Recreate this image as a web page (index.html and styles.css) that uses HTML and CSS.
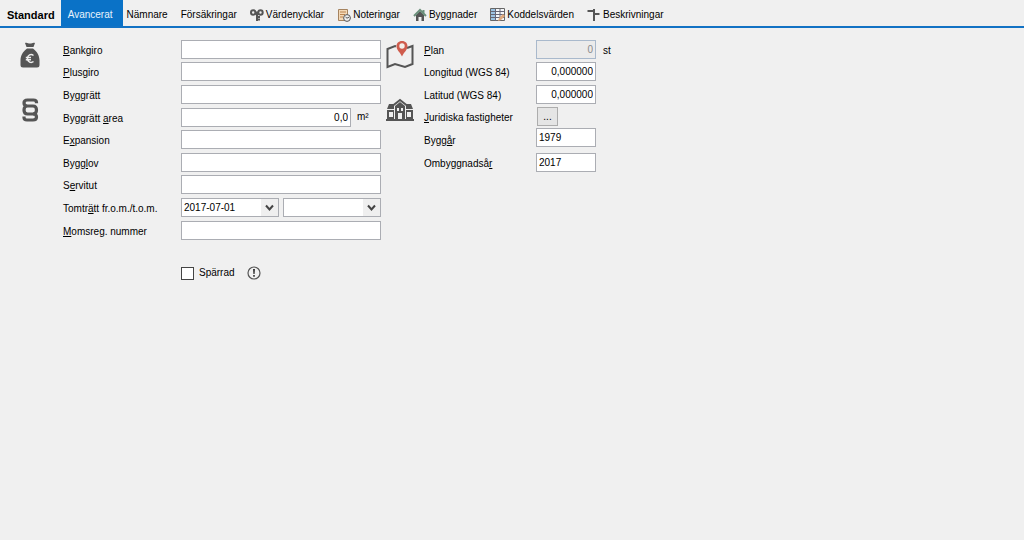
FILE: index.html
```html
<!DOCTYPE html>
<html lang="sv">
<head>
<meta charset="utf-8">
<title>Fastighet</title>
<link rel="stylesheet" href="styles.css">
</head>
<body>
<nav class="tabs">
  <button class="tab tab-standard">Standard</button>
  <button class="tab tab-active">Avancerat</button>
  <button class="tab tab-plain">Nämnare</button>
  <button class="tab">Försäkringar</button>
  <button class="tab"><svg width="14" height="14" viewBox="0 0 14 14" fill="none" stroke="#555" stroke-width="2"><circle cx="3.200" cy="4.500" r="2.200"/><circle cx="10.500" cy="4.500" r="2.200"/><path d="M5 5h4" stroke-width="3"/><path d="M7 5v8M7 9h3M7 11.500h3"/></svg>Värdenycklar</button>
  <button class="tab"><svg width="14" height="14" viewBox="0 0 14 14" fill="none"><path d="M1.500 1.500h9v11h-9z" fill="#f3d9b8" stroke="#a5835f"/><path d="M3 4h6M3 6.500h5M3 9h3" stroke="#b9824e"/><circle cx="10" cy="10" r="3.400" fill="#eee" stroke="#555"/><path d="M8.500 9l1.500 1.200 2-1" stroke="#555"/></svg>Noteringar</button>
  <button class="tab"><svg width="14" height="14" viewBox="0 0 14 14"><path d="M3 7l4-4 4 4v6H8.500V9H5.500v4H3z" fill="#555"/><path d="M1 8l6-6 6 6M10.500 2v3" fill="none" stroke="#6b8f7b" stroke-width="2"/></svg>Byggnader</button>
  <button class="tab"><svg width="15" height="14" viewBox="0 0 15 14"><path d="M.5.500h14v12H.5z" fill="#f4f6f8" stroke="#666"/><path d="M1 1h4v11H1z" fill="#9cc3e2"/><path d="M1 3.500h13M1 6.500h13M1 9.500h13M5.500 1v12M10 1v12" stroke="#667" fill="none"/><path d="M8 13l1-3 4-4 2 2-4 4z" fill="#dfa97d"/></svg>Koddelsvärden</button>
  <button class="tab"><svg width="14" height="14" viewBox="0 0 14 14"><path d="M6 1h2v12H6zM1 2h6v2H1L0 3zM8 5h4l1 1-1 1H8z" fill="#555"/></svg>Beskrivningar</button>
</nav>
<main class="panel">
  <div class="icons icons-left">
    <svg width="20" height="26" viewBox="0 0 20 26"><path d="M5 1c2-1 3 .6 5 .6S13 0 15 1l-1.500 4h-7zM7 6.500h6c4 3 6.500 7 6.500 12V23q0 2.500-2.500 2.500H3Q.5 25.500.5 23v-4.500c0-5 2.500-9 6.500-12z" fill="#555"/><path d="M13.500 13.500c-2.500-2-6-.5-6 3s3.500 5 6 3M5.800 15.500H11M5.800 17.700H11" fill="none" stroke="#f0f0f0" stroke-width="1.500"/></svg>
    <svg class="icon-law" width="20" height="24" viewBox="0 0 20 24" fill="none" stroke="#555" stroke-width="3.200" stroke-linejoin="round"><path d="M16.500 5.200V4.500q0-2.500-3-2.500H7.500Q4 2 4 5t3.500 3H13q3.500 0 3.500 4T13 16H7.500Q4 16 4 12t3.500-4"/><path d="M13 16q3.500 0 3.500 3T13 22H7q-3 0-3-2.500v-1"/></svg>
  </div>
  <div class="form form-left">
    <label for="bankgiro"><u>B</u>ankgiro</label><input id="bankgiro">
    <label for="plusgiro"><u>P</u>lusgiro</label><input id="plusgiro">
    <label for="byggratt">By<u>g</u>grätt</label><input id="byggratt">
    <label for="area">Byggrätt <u>a</u>rea</label><div class="pair pair-unit"><input id="area" class="num" value="0,0"><span>m²</span></div>
    <label for="expansion">E<u>x</u>pansion</label><input id="expansion">
    <label for="bygglov">Bygg<u>l</u>ov</label><input id="bygglov">
    <label for="servitut">S<u>e</u>rvitut</label><input id="servitut">
    <label for="from">Tomtr<u>ä</u>tt fr.o.m./t.o.m.</label>
    <div class="pair">
      <div class="combo"><select id="from"><option>2017-07-01</option></select><svg class="arrow" width="17" height="17" viewBox="0 0 17 17"><path d="M0 0h17v17H0z" fill="#efefef"/><path d="M5 6.500l3.500 4 3.500-4" fill="none" stroke="#444" stroke-width="2"/></svg></div>
      <div class="combo"><select aria-label="Tomträtt t.o.m."><option></option></select><svg class="arrow" width="17" height="17" viewBox="0 0 17 17"><path d="M0 0h17v17H0z" fill="#efefef"/><path d="M5 6.500l3.500 4 3.500-4" fill="none" stroke="#444" stroke-width="2"/></svg></div>
    </div>
    <label for="moms"><u>M</u>omsreg. nummer</label><input id="moms">
    <div class="blocked"><input type="checkbox" id="sparrad"><label for="sparrad">Spärrad</label><svg width="14" height="14" viewBox="0 0 14 14"><circle cx="7" cy="7" r="6" fill="none" stroke="#555" stroke-width="1.200"/><path d="M6 3h2l-.4 5H6.400zM6.200 9h1.600v1.700H6.200z" fill="#333"/></svg></div>
  </div>
  <div class="icons icons-right">
    <svg width="28" height="30" viewBox="0 0 28 30"><path d="M10 6.500L9 6 1.500 9v18L9 24l10 3 7.500-3V6L21 8" fill="none" stroke="#555" stroke-width="2"/><path d="M16 1c-3.500 0-5.500 2.500-5.500 5.200C10.500 10 14 12 16 16.500c2-4.500 5.500-6.500 5.500-10.300C21.500 3.500 19.500 1 16 1z" fill="#cf5c4d"/><circle cx="16" cy="6" r="2.700" fill="#f5eee9"/></svg>
    <svg class="icon-houses" width="28" height="24" viewBox="0 0 28 24"><path d="M0 21h28v2H0zM1 12h7v9H1zM20 12h7v9h-7zM3 6h5v5H1zM20 6h5l2 5h-7zM9 8l5-4 5 4v13H9z" fill="#555"/><path d="M7 7.500l7-5.500 7 5.500" fill="none" stroke="#555" stroke-width="2"/><path d="M3 14h4v5H3zM21 14h4v5h-4zM11 10h2v3h-2zM15 10h2v3h-2zM12 15h4v6h-4zM8.200 8h.8v13h-.8zM19 8h.8v13H19z" fill="#f0f0f0"/></svg>
  </div>
  <div class="form form-right">
    <label for="plan"><u>P</u>lan</label><input id="plan" class="num" value="0" disabled><span class="unit">st</span>
    <label for="lon">Longitud (WGS 84)</label><input id="lon" class="num" value="0,000000">
    <label for="lat">Latitud (WGS 84)</label><input id="lat" class="num" value="0,000000">
    <label for="jur"><u>J</u>uridiska fastigheter</label><button id="jur" class="more">...</button>
    <label for="year" class="low">Bygg<u>å</u>r</label><input id="year" value="1979">
    <label for="rebuild">Ombyggnadså<u>r</u></label><input id="rebuild" value="2017">
  </div>
</main>
</body>
</html>
```
FILE: styles.css
```css
* { box-sizing: border-box; }
body {
  margin: 0;
  background: #f0f0f0;
  color: #000;
  font: 10px/18px "Liberation Sans", Arial, sans-serif;
}
button, input, select { font: inherit; color: inherit; margin: 0; }
.tabs {
  display: flex;
  height: 28px;
  border-bottom: 2px solid #1272c4;
}
.tab {
  display: flex;
  align-items: center;
  gap: 2px;
  padding: 4px 7px 0 6px;
  border: 0;
  background: none;
  white-space: nowrap;
}
.tab-standard { padding: 4px 6px 0 7px; font-size: 11px; font-weight: bold; }
.tab-active { padding: 4px 10px 0 7px; background: #0a72c7; color: #e8f3fc; }
.tab-plain { padding-left: 4px; }
.panel {
  display: grid;
  grid-template-columns: 43px 318px 43px auto;
  justify-content: start;
  padding: 12px 20px;
}
.icons { display: flex; flex-direction: column; align-items: flex-start; }
.icons-left { padding-top: 2px; }
.icons-right { padding-left: 5px; }
.icon-law { margin-top: 30px; }
.icon-houses { margin-top: 28px; }
.form { display: grid; row-gap: 4px; align-content: start; }
.form-left {
  grid-template-columns: 118px 1fr;
  grid-template-rows: 18px 19px 19px 18px 19px 18px 19px 19px 19px;
}
.form-right {
  grid-template-columns: 112px 60px auto;
  grid-template-rows: 18px 19px 18px 17px 21px 19px;
}
.form > label { grid-column: 1; padding-top: 2px; white-space: nowrap; }
.form > .low { padding-top: 4px; }
.unit { padding: 2px 0 0 7px; }
input:not([type="checkbox"]), select {
  width: 100%;
  height: 19px;
  padding: 0 2px;
  border: 1px solid #abadb3;
  border-radius: 0;
  background: #fff;
}
input.num { text-align: right; }
input:disabled { border-color: #a9b9cc; background: #ebebeb; color: #8a8a8a; }
.pair { display: grid; grid-template-columns: 1fr 1fr; gap: 4px; }
.pair-unit { grid-template-columns: 170px auto; gap: 6px; }
.combo { position: relative; }
select { appearance: none; }
.arrow { position: absolute; top: 1px; right: 1px; pointer-events: none; }
.more {
  width: 21px;
  height: 19px;
  margin-left: 1px;
  padding: 0;
  border: 1px solid #adadad;
  background: #e5e5e5;
  line-height: 14px;
}
.blocked { grid-column: 2; display: flex; align-items: center; padding-top: 20px; }
.blocked label { margin: 0 12px 0 5px; }
input[type="checkbox"] {
  appearance: none;
  width: 13px;
  height: 13px;
  border: 1px solid #444;
  background: #fff;
}
```
